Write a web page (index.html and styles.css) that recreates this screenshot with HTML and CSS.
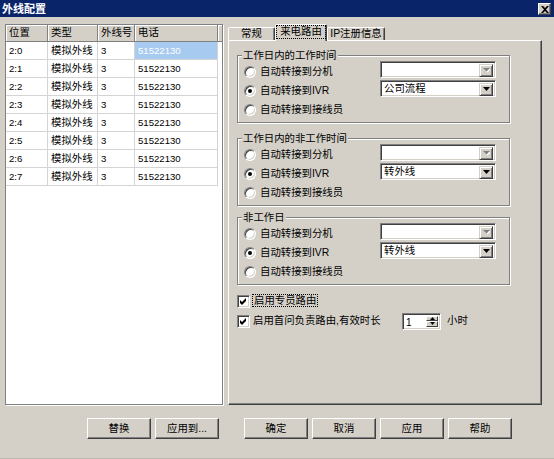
FILE: index.html
```html
<!DOCTYPE html>
<html lang="zh">
<head>
<meta charset="utf-8">
<title>外线配置</title>
<link rel="stylesheet" href="styles.css">
</head>
<body>
<div class="window">
  <div class="titlebar">
    <span class="title">外线配置</span>
    <span class="close"><svg width="8" height="7" viewBox="0 0 8 7"><polygon points="0,0 2,0 4,2 6,0 8,0 5,3.5 8,7 6,7 4,5 2,7 0,7 3,3.5" fill="#000"/></svg></span>
  </div>
  <div class="main">
    <div class="list">
      <div class="lhead">
        <div class="hc c1">位置</div>
        <div class="hc c2">类型</div>
        <div class="hc c3">外线号</div>
        <div class="hc c4">电话</div>
        <div class="hfill"></div>
      </div>
      <div class="lrow"><div class="cell c1 num">2:0</div><div class="cell c2">模拟外线</div><div class="cell c3 num">3</div><div class="cell c4 num sel">51522130</div></div>
      <div class="lrow"><div class="cell c1 num">2:1</div><div class="cell c2">模拟外线</div><div class="cell c3 num">3</div><div class="cell c4 num">51522130</div></div>
      <div class="lrow"><div class="cell c1 num">2:2</div><div class="cell c2">模拟外线</div><div class="cell c3 num">3</div><div class="cell c4 num">51522130</div></div>
      <div class="lrow"><div class="cell c1 num">2:3</div><div class="cell c2">模拟外线</div><div class="cell c3 num">3</div><div class="cell c4 num">51522130</div></div>
      <div class="lrow"><div class="cell c1 num">2:4</div><div class="cell c2">模拟外线</div><div class="cell c3 num">3</div><div class="cell c4 num">51522130</div></div>
      <div class="lrow"><div class="cell c1 num">2:5</div><div class="cell c2">模拟外线</div><div class="cell c3 num">3</div><div class="cell c4 num">51522130</div></div>
      <div class="lrow"><div class="cell c1 num">2:6</div><div class="cell c2">模拟外线</div><div class="cell c3 num">3</div><div class="cell c4 num">51522130</div></div>
      <div class="lrow"><div class="cell c1 num">2:7</div><div class="cell c2">模拟外线</div><div class="cell c3 num">3</div><div class="cell c4 num">51522130</div></div>
    </div>
    <div class="tabs">
      <div class="tabstrip">
        <div class="tab t1">常规</div>
        <div class="tab t2 active"><span class="focus">来电路由</span></div>
        <div class="tab t3">IP注册信息</div>
      </div>
      <div class="panel">
        <div class="group">
          <div class="gtitle">工作日内的工作时间</div>
          <div class="row"><span class="radio"></span><span class="rlabel">自动转接到分机</span>
            <div class="combo"><span class="ctext"></span><span class="cbtn"><svg width="7" height="5" viewBox="0 0 7 5"><polygon points="1,1 8,1 4.5,4.5" fill="#fff"/><polygon points="0,0 7,0 3.5,3.5" fill="#808080"/></svg></span></div>
          </div>
          <div class="row"><span class="radio on"></span><span class="rlabel">自动转接到IVR</span>
            <div class="combo"><span class="ctext">公司流程</span><span class="cbtn"><svg width="7" height="4" viewBox="0 0 7 4"><polygon points="0,0 7,0 3.5,4" fill="#000"/></svg></span></div>
          </div>
          <div class="row"><span class="radio"></span><span class="rlabel">自动转接到接线员</span></div>
        </div>
        <div class="group g2">
          <div class="gtitle">工作日内的非工作时间</div>
          <div class="row"><span class="radio"></span><span class="rlabel">自动转接到分机</span>
            <div class="combo"><span class="ctext"></span><span class="cbtn"><svg width="7" height="5" viewBox="0 0 7 5"><polygon points="1,1 8,1 4.5,4.5" fill="#fff"/><polygon points="0,0 7,0 3.5,3.5" fill="#808080"/></svg></span></div>
          </div>
          <div class="row"><span class="radio on"></span><span class="rlabel">自动转接到IVR</span>
            <div class="combo"><span class="ctext">转外线</span><span class="cbtn"><svg width="7" height="4" viewBox="0 0 7 4"><polygon points="0,0 7,0 3.5,4" fill="#000"/></svg></span></div>
          </div>
          <div class="row"><span class="radio"></span><span class="rlabel">自动转接到接线员</span></div>
        </div>
        <div class="group g3">
          <div class="gtitle">非工作日</div>
          <div class="row"><span class="radio"></span><span class="rlabel">自动转接到分机</span>
            <div class="combo"><span class="ctext"></span><span class="cbtn"><svg width="7" height="5" viewBox="0 0 7 5"><polygon points="1,1 8,1 4.5,4.5" fill="#fff"/><polygon points="0,0 7,0 3.5,3.5" fill="#808080"/></svg></span></div>
          </div>
          <div class="row"><span class="radio on"></span><span class="rlabel">自动转接到IVR</span>
            <div class="combo"><span class="ctext">转外线</span><span class="cbtn"><svg width="7" height="4" viewBox="0 0 7 4"><polygon points="0,0 7,0 3.5,4" fill="#000"/></svg></span></div>
          </div>
          <div class="row"><span class="radio"></span><span class="rlabel">自动转接到接线员</span></div>
        </div>
        <div class="checkrow first">
          <span class="check"><svg width="7" height="7" viewBox="0 0 7 7"><polygon points="0,2 2,4 6,0 6,3 2,7 0,5" fill="#000"/></svg></span>
          <span class="clabel"><span class="focus2">启用专员路由</span></span>
        </div>
        <div class="checkrow">
          <span class="check"><svg width="7" height="7" viewBox="0 0 7 7"><polygon points="0,2 2,4 6,0 6,3 2,7 0,5" fill="#000"/></svg></span>
          <span class="clabel wide">启用首问负责路由,有效时长</span>
          <div class="spin">
            <span class="stext">1</span>
            <span class="sbtns">
              <span class="sbtn"><svg width="5" height="3" viewBox="0 0 5 3"><polygon points="0,3 5,3 2.5,0" fill="#000"/></svg></span>
              <span class="sbtn"><svg width="5" height="3" viewBox="0 0 5 3"><polygon points="0,0 5,0 2.5,3" fill="#000"/></svg></span>
            </span>
          </div>
          <span class="unit">小时</span>
        </div>
      </div>
    </div>
  </div>
  <div class="buttons">
    <button class="btn">替换</button>
    <button class="btn">应用到...</button>
    <button class="btn far">确定</button>
    <button class="btn">取消</button>
    <button class="btn">应用</button>
    <button class="btn">帮助</button>
  </div>
</div>
</body>
</html>
```

FILE: styles.css
```css
* { box-sizing: border-box; }
html, body { margin: 0; padding: 0; }
body {
  width: 554px;
  height: 459px;
  overflow: hidden;
  background: #d4d0c8;
  color: #000;
  font-family: "Liberation Sans", "Noto Sans CJK SC", sans-serif;
  font-size: 10.4px;
}
.window {
  height: 459px;
  display: flex;
  flex-direction: column;
  border-bottom: 1px solid #bcb8b0;
}
.titlebar {
  height: 17px;
  flex: none;
  background: #0a246a;
  display: flex;
  align-items: center;
  justify-content: space-between;
  padding: 0 3px 0 2px;
}
.title {
  color: #fff;
  font-family: "Noto Sans CJK SC", sans-serif;
  font-weight: bold;
  font-size: 11px;
  line-height: 17px;
}
.close {
  width: 13px;
  height: 12px;
  margin-top: 1px;
  background: #d4d0c8;
  border: 1px solid;
  border-color: #fff #404040 #404040 #fff;
  box-shadow: inset -1px -1px #808080;
  display: flex;
  align-items: center;
  justify-content: center;
}
.main {
  display: flex;
  gap: 5px;
  padding: 7px 0 0 5px;
  height: 388px;
  flex: none;
}
/* list */
.list {
  width: 218px;
  height: 381px;
  background: #fff;
  border: 1px solid #808080;
  box-shadow: 1px 1px 0 #fff;
}
.lhead {
  display: flex;
  height: 17px;
  background: #d4d0c8;
}
.hc {
  border-right: 1px solid #808080;
  border-bottom: 1px solid #808080;
  box-shadow: inset 1px 1px #fff;
  padding-left: 3px;
  line-height: 16px;
}
.hfill {
  flex: 1;
  border-bottom: 1px solid #808080;
  box-shadow: inset 1px 1px #fff;
}
.c1 { width: 42px; }
.c2 { width: 50px; }
.c3 { width: 37px; }
.c4 { width: 83px; }
.lrow {
  display: flex;
  height: 18px;
}
.cell {
  border-right: 1px solid #d4d4d4;
  border-bottom: 1px solid #d4d4d4;
  padding-left: 3px;
  line-height: 17px;
  white-space: nowrap;
}
.num { font-size: 9.6px; }
.sel { background: #a6caf0; color: #fff; }
/* tabs */
.tabs {
  width: 314px;
  display: flex;
  flex-direction: column;
}
.tabstrip {
  display: flex;
  align-items: flex-end;
  height: 16px;
}
.tab {
  height: 13px;
  border: 1px solid;
  border-bottom: none;
  border-color: #fff #404040 transparent #fff;
  box-shadow: inset -1px 0 #808080;
  border-radius: 2px 2px 0 0;
  background: #d4d0c8;
  display: flex;
  align-items: center;
  justify-content: center;
  line-height: 12px;
  white-space: nowrap;
}
.t1 { width: 47px; }
.t2 { width: 52px; }
.t3 { width: 58px; }
.active {
  height: 17px;
  margin-bottom: -1px;
  z-index: 1;
  align-items: flex-start;
  padding-top: 1px;
}
.focus {
  outline: 1px dotted #000;
  padding: 0 3px;
  line-height: 12px;
}
.panel {
  height: 365px;
  border: 1px solid;
  border-color: #fff #404040 #404040 #fff;
  box-shadow: inset -1px -1px #808080;
  padding: 14px 0 0 8px;
}
.group {
  width: 273px;
  border: 1px solid #808080;
  box-shadow: inset 1px 1px #fff, 1px 1px #fff;
  padding: 0 0 3px 6px;
}
.g2 { margin-top: 15px; }
.g3 { margin-top: 11px; }
.gtitle {
  margin: -7px 0 0 -2px;
  padding: 0 1px;
  background: #d4d0c8;
  width: fit-content;
  height: 13px;
  line-height: 13px;
}
.row {
  display: flex;
  align-items: center;
  height: 19px;
}
.radio {
  flex: none;
  width: 12px;
  height: 12px;
  border-radius: 50%;
  background: #fff;
  border: 1px solid;
  border-color: #808080 #fff #fff #808080;
  box-shadow: inset 1px 1px #404040, inset -1px -1px #d4d0c8;
  display: grid;
  place-items: center;
}
.radio.on::after {
  content: "";
  width: 4px;
  height: 4px;
  border-radius: 50%;
  background: #000;
}
.rlabel {
  width: 120px;
  margin-left: 4px;
  line-height: 12px;
  white-space: nowrap;
}
.combo {
  width: 116px;
  height: 17px;
  margin-bottom: 5px;
  display: flex;
  background: #fff;
  border: 1px solid;
  border-color: #808080 #fff #fff #808080;
  box-shadow: inset 1px 1px #404040, inset -1px -1px #d4d0c8;
  padding: 1px 1px 1px 1px;
}
.ctext {
  flex: 1;
  padding-left: 2px;
  line-height: 13px;
}
.cbtn {
  width: 14px;
  height: 13px;
  margin-top: 1px;
  margin-right: 1px;
  background: #d4d0c8;
  border: 1px solid;
  border-color: #d4d0c8 #404040 #404040 #d4d0c8;
  box-shadow: inset 1px 1px #fff, inset -1px -1px #808080;
  display: flex;
  align-items: center;
  justify-content: center;
}
/* checkboxes */
.checkrow {
  display: flex;
  align-items: center;
  height: 20px;
}
.checkrow.first { margin-top: 6px; }
.check {
  flex: none;
  width: 13px;
  height: 13px;
  background: #fff;
  border: 1px solid;
  border-color: #808080 #fff #fff #808080;
  box-shadow: inset 1px 1px #404040, inset -1px -1px #d4d0c8;
  display: flex;
  align-items: center;
  justify-content: center;
}
.clabel {
  margin-left: 3px;
  line-height: 12px;
  white-space: nowrap;
}
.clabel.wide { width: 149px; }
.focus2 {
  outline: 1px dotted #000;
  padding: 0 1px;
}
.spin {
  width: 39px;
  height: 17px;
  display: flex;
  background: #fff;
  border: 1px solid;
  border-color: #808080 #fff #fff #808080;
  box-shadow: inset 1px 1px #404040, inset -1px -1px #d4d0c8;
  padding: 2px 2px 2px 2px;
}
.stext {
  flex: 1;
  line-height: 13px;
  padding-left: 1px;
  font-size: 10px;
}
.sbtns {
  width: 12px;
  display: flex;
  flex-direction: column;
}
.sbtn {
  flex: 1;
  background: #d4d0c8;
  border: 1px solid;
  border-color: #fff #404040 #404040 #fff;
  display: flex;
  align-items: center;
  justify-content: center;
}
.unit {
  margin-left: 6px;
  line-height: 12px;
}
/* buttons */
.buttons {
  display: flex;
  gap: 4px;
  padding-left: 87px;
  margin-top: 13px;
}
.btn {
  width: 64px;
  height: 21px;
  margin: 0;
  padding: 0;
  background: #d4d0c8;
  border: 1px solid;
  border-color: #fff #404040 #404040 #fff;
  box-shadow: inset -1px -1px #808080;
  font-family: "Liberation Sans", "Noto Sans CJK SC", sans-serif;
  font-size: 10.4px;
  color: #000;
  line-height: 12px;
}
.far { margin-left: 21px; }
```
